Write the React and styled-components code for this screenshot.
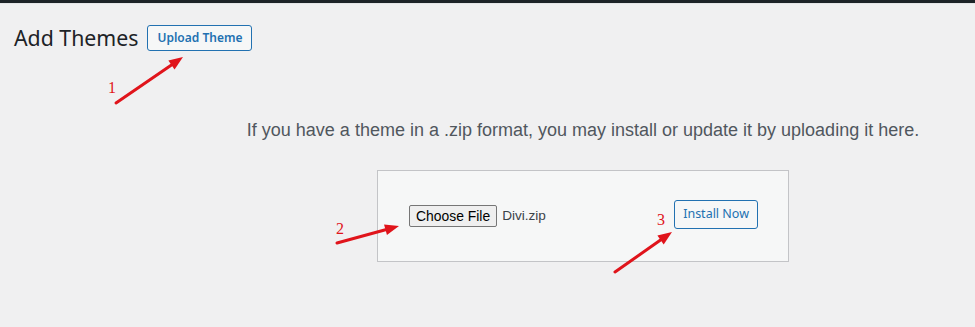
import React from "react";
import styled, { createGlobalStyle } from "styled-components";

const GlobalStyle = createGlobalStyle`
  html, body {
    margin: 0;
    padding: 0;
    background: #f0f0f1;
  }
  body {
    font-family: "Noto Sans", "Open Sans", sans-serif;
    color: #1d2327;
  }
`;

const Page = styled.div`
  position: relative;
  width: 975px;
  height: 327px;
  overflow: hidden;
  background: #f0f0f1;
`;

const TopBar = styled.div`
  height: 3px;
  background: #1d2327;
  border-bottom: 1px solid #e4e5e7;
`;

const HeaderRow = styled.div`
  display: flex;
  align-items: center;
  gap: 9px;
  padding: 20px 0 0 14px;
`;

const Title = styled.h1`
  margin: 0;
  font-size: 21.3px;
  font-weight: 400;
  line-height: 28px;
  color: #1d2327;
`;

const OutlineButton = styled.button`
  font-family: "Noto Sans", "Open Sans", sans-serif;
  font-size: ${(p) => (p.$bold ? "12px" : "12.5px")};
  font-weight: ${(p) => (p.$bold ? 600 : 400)};
  color: #2271b1;
  background: #f6f7f7;
  border: 1px solid #2271b1;
  border-radius: 3px;
  height: ${(p) => p.$h}px;
  padding: 0 ${(p) => p.$px}px;
  line-height: 1;
  cursor: pointer;
`;

const UploadSection = styled.div`
  padding-left: 191px;
  text-align: center;
`;

const Description = styled.p`
  margin: 67px 0 0;
  font-family: "Liberation Sans", Arial, sans-serif;
  font-size: 18px;
  color: #50575e;
  line-height: 22px;
`;

const UploadForm = styled.form`
  display: inline-flex;
  align-items: center;
  justify-content: space-between;
  box-sizing: border-box;
  width: 412px;
  height: 92px;
  margin-top: 29px;
  padding: 0 30px 4px 31px;
  background: #f6f7f7;
  border: 1px solid #c3c4c7;
  text-align: left;
`;

const FileGroup = styled.div`
  display: flex;
  align-items: center;
  gap: 5px;
  margin-top: 3px;
`;

const ChooseButton = styled.span`
  display: inline-flex;
  align-items: center;
  box-sizing: border-box;
  height: 22px;
  padding: 0 6px;
  font-family: "Liberation Sans", Arial, sans-serif;
  font-size: 13.9px;
  color: #000;
  background: #efefef;
  border: 1px solid #767676;
  border-radius: 2px;
`;

const FileName = styled.span`
  font-family: "Liberation Sans", Arial, sans-serif;
  font-size: 13.6px;
  color: #3c434a;
`;

const Overlay = styled.svg`
  position: absolute;
  inset: 0;
  pointer-events: none;
`;

const Label = styled.text`
  font-family: "Liberation Serif", "Times New Roman", serif;
  font-size: 16px;
  fill: #e0141b;
`;

const arrows = [
  { x1: 116, y1: 103, x2: 183, y2: 57 },
  { x1: 337, y1: 243, x2: 399, y2: 226 },
  { x1: 615, y1: 272, x2: 672, y2: 232 },
];

const labels = [
  { x: 108, y: 93, t: "1" },
  { x: 336, y: 234, t: "2" },
  { x: 657, y: 225, t: "3" },
];

function Arrow({ x1, y1, x2, y2 }) {
  const ang = Math.atan2(y2 - y1, x2 - x1);
  const len = 14;
  const half = 5.5;
  const bx = x2 - len * Math.cos(ang);
  const by = y2 - len * Math.sin(ang);
  const px = -Math.sin(ang) * half;
  const py = Math.cos(ang) * half;
  return (
    <g>
      <line x1={x1} y1={y1} x2={bx} y2={by} stroke="#e0141b" strokeWidth="3" strokeLinecap="round" />
      <polygon
        points={`${x2},${y2} ${bx + px},${by + py} ${bx - px},${by - py}`}
        fill="#e0141b"
      />
    </g>
  );
}

export default function App() {
  return (
    <Page>
      <GlobalStyle />
      <TopBar />
      <HeaderRow>
        <Title>Add Themes</Title>
        <OutlineButton $bold $h={26} $px={9}>Upload Theme</OutlineButton>
      </HeaderRow>
      <UploadSection>
        <Description>
          If you have a theme in a .zip format, you may install or update it by uploading it here.
        </Description>
        <UploadForm onSubmit={(e) => e.preventDefault()}>
          <FileGroup>
            <ChooseButton>Choose File</ChooseButton>
            <FileName>Divi.zip</FileName>
          </FileGroup>
          <OutlineButton $h={29} $px={8}>Install Now</OutlineButton>
        </UploadForm>
      </UploadSection>
      <Overlay width="975" height="327" viewBox="0 0 975 327">
        {arrows.map((a, i) => (
          <Arrow key={i} {...a} />
        ))}
        {labels.map((l) => (
          <Label key={l.t} x={l.x} y={l.y}>{l.t}</Label>
        ))}
      </Overlay>
    </Page>
  );
}
